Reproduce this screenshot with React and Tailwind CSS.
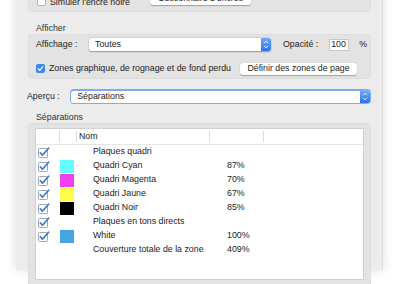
import React from "react";

function Stepper({ className = "" }) {
  return (
    <div className={"flex items-center justify-center bg-gradient-to-b from-[#6aa8fb] to-[#2a73ec] " + className}>
      <svg width="6" height="9" viewBox="0 0 6 9" fill="none">
        <path d="M1 3.2 L3 1.2 L5 3.2" stroke="white" strokeWidth="1" />
        <path d="M1 5.8 L3 7.8 L5 5.8" stroke="white" strokeWidth="1" />
      </svg>
    </div>
  );
}

function TableCheck() {
  return (
    <svg width="12" height="11" viewBox="0 0 12 11">
      <rect x="0.5" y="1.5" width="9" height="9" rx="1" fill="white" stroke="#9aa6b4" />
      <path d="M2.3 5.8 L4.4 8.2 L10.6 1.2" stroke="#3a78d4" strokeWidth="1.7" fill="none" strokeLinecap="round" strokeLinejoin="round" />
    </svg>
  );
}

const rows = [
  { name: "Plaques quadri", check: true },
  { name: "Quadri Cyan", check: true, color: "#66fbff", pct: "87%" },
  { name: "Quadri Magenta", check: true, color: "#ee3ff0", pct: "70%" },
  { name: "Quadri Jaune", check: true, color: "#fffb4d", pct: "67%" },
  { name: "Quadri Noir", check: true, color: "#000000", pct: "85%" },
  { name: "Plaques en tons directs", check: true },
  { name: "White", check: true, color: "#45a4e2", pct: "100%" },
  { name: "Couverture totale de la zone", check: false, pct: "409%" },
];

export default function App() {
  return (
    <div
      className="w-[400px] h-[284px] bg-white overflow-hidden text-[8.8px] text-[#222]"
      style={{ fontFamily: '"Liberation Sans", Arial, sans-serif' }}
    >
      <div className="ml-[16px] w-[367px] h-[284px] bg-[#ececec] shadow-[0_0_10px_rgba(0,0,0,0.14)] border-r border-[#dcdcdc] pl-[12px] pr-[11px]">
        {/* top cut-off group */}
        <div className="-mt-[14px] h-[26px] rounded-[4px] bg-[#e3e3e3] border border-[#dddddd] flex items-end pb-[3px] pl-[8px]">
          <div className="mb-[2px] w-[9px] h-[9px] bg-white border border-[#b5b5b5] rounded-[2px]" />
          <span className="ml-[4px] leading-[11px]">Simuler l'encre noire</span>
          <div className="ml-[20px] mb-[3px] w-[101px] h-[12px] bg-white rounded-[3px] shadow-[0_0.5px_1px_rgba(0,0,0,0.3)] flex items-center justify-center">
            Gestionnaire d'encres
          </div>
        </div>

        {/* Afficher */}
        <div className="mt-[10px] h-[12px] leading-[12px] pl-[8px] text-[#333]">Afficher</div>
        <div className="h-[45px] rounded-[4px] bg-[#e3e3e3] border border-[#dddddd] pl-[7px] pt-[3px]">
          <div className="h-[13px] flex items-center">
            <span className="w-[53px]">Affichage :</span>
            <div className="w-[182px] h-[13px] bg-white rounded-[3px] shadow-[0_0.5px_1.5px_rgba(0,0,0,0.35)] flex items-center overflow-hidden">
              <span className="pl-[6px] flex-1">Toutes</span>
              <Stepper className="w-[10px] h-[13px]" />
            </div>
            <span className="ml-[12px]">Opacité :</span>
            <div className="ml-[11px] w-[20px] h-[12px] bg-white border border-[#c8c8c8] flex items-center pl-[1px]">100</div>
            <span className="ml-[10px]">%</span>
          </div>
          <div className="mt-[11px] h-[13px] flex items-center">
            <div className="w-[9px] h-[9px] rounded-[2px] bg-[#3d86f5] flex items-center justify-center">
              <svg width="7" height="7" viewBox="0 0 7 7">
                <path d="M1.2 3.6 L2.8 5.3 L5.8 1.6" stroke="white" strokeWidth="1.2" fill="none" strokeLinecap="round" strokeLinejoin="round" />
              </svg>
            </div>
            <span className="ml-[4px] w-[191px] whitespace-nowrap">Zones graphique, de rognage et de fond perdu</span>
            <div className="w-[117px] h-[12px] bg-white rounded-[3px] shadow-[0_0.5px_1px_rgba(0,0,0,0.3)] flex items-center justify-center">
              Définir des zones de page
            </div>
          </div>
        </div>

        {/* Aperçu */}
        <div className="mt-[10px] -ml-[1px] h-[15px] flex items-center">
          <span className="w-[43px]">Aperçu :</span>
          <div className="w-[303px] h-[15px] rounded-[4px] bg-[#80a9f2] p-[1.5px]">
            <div className="h-full bg-white rounded-[2.5px] flex items-center overflow-hidden">
              <span className="pl-[6px] flex-1">Séparations</span>
              <Stepper className="w-[10px] h-full" />
            </div>
          </div>
        </div>

        {/* Séparations */}
        <div className="mt-[7px] h-[12px] leading-[12px] pl-[8px] text-[#333]">Séparations</div>
        <div className="h-[170px] rounded-[4px] bg-[#e3e3e3] border border-[#dddddd] pt-[4px] px-[6px]">
          <div className="h-[152px] bg-white border border-[#d2d2d2]">
            <div className="h-[16px] flex items-center border-b border-[#e6e6e6]">
              <div className="w-[24px] h-[11px] border-r border-[#dcdcdc]" />
              <div className="w-[17px] h-[11px] border-r border-[#dcdcdc]" />
              <div className="w-[133px] h-[11px] border-r border-[#dcdcdc] pl-[2px] flex items-center">Nom</div>
              <div className="w-[54px] h-[11px] border-r border-[#dcdcdc]" />
            </div>
            {rows.map((r, i) => (
              <div key={i} className="h-[14px] flex items-center">
                <div className="w-[24px] pl-[2px] flex items-center">{r.check ? <TableCheck /> : null}</div>
                <div className="w-[17px] flex items-center">
                  {r.color ? <div className="w-[14px] h-[13px]" style={{ background: r.color }} /> : null}
                </div>
                <div className="w-[133px] pl-[16px] whitespace-nowrap">{r.name}</div>
                <div className="w-[54px] pl-[17px]">{r.pct || ""}</div>
              </div>
            ))}
          </div>
        </div>
      </div>
    </div>
  );
}
